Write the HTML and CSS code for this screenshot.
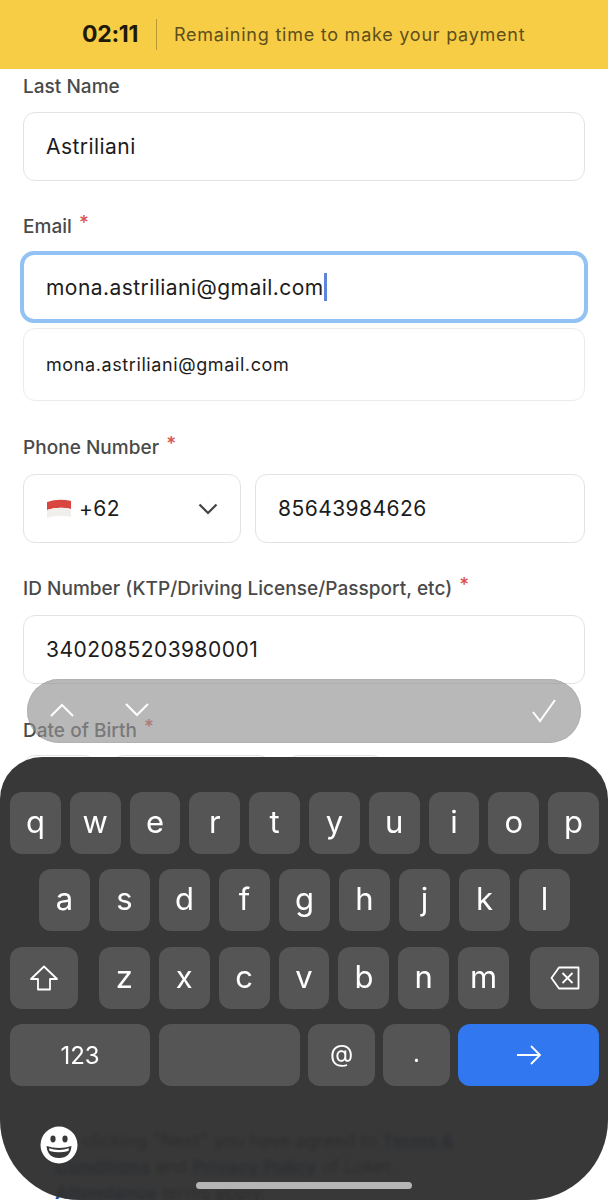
FILE: index.html
```html
<!DOCTYPE html>
<html lang="en">
<head>
    <meta charset="UTF-8">
    <meta name="viewport" content="width=device-width, initial-scale=1.0">
    <title>Payment Details</title>
    <link rel="stylesheet" href="styles.css">
</head>
<body>
    <div class="timer-bar">
        <span class="timer-count">02:11</span>
        <span class="timer-text">Remaining time to make your payment</span>
    </div>

    <form class="form">
        <div class="label first">Last Name</div>
        <div class="input">Astriliani</div>

        <div class="label email">Email <span class="req">*</span></div>
        <div class="input focused">mona.astriliani@gmail.com<span class="caret"></span></div>
        <div class="suggestion">mona.astriliani@gmail.com</div>

        <div class="label phone">Phone Number <span class="req">*</span></div>
        <div class="phone-row">
            <div class="input code">
                <svg class="flag" width="26" height="20" viewBox="0 0 26 20">
                    <path d="M1 3 Q13 -1 25 2 V10 Q13 7 1 11 Z" fill="#d8463f"/>
                    <path d="M1 11 Q13 7 25 10 V18 Q13 15 1 19 Z" fill="#f1efec"/>
                </svg>
                <span>+62</span>
                <svg class="chevron" width="20" height="12" viewBox="0 0 20 12">
                    <path d="M1.5 1.5 L10 10 L18.5 1.5" fill="none" stroke="#444" stroke-width="2.2"/>
                </svg>
            </div>
            <div class="input number">85643984626</div>
        </div>

        <div class="label">ID Number (KTP/Driving License/Passport, etc) <span class="req">*</span></div>
        <div class="input">3402085203980001</div>

        <div class="label dob">Date of Birth <span class="req">*</span></div>
        <div class="dob-row">
            <div class="input day"></div>
            <div class="input month"></div>
            <div class="input year"></div>
        </div>

        <p class="terms">By clicking "Next" you have agreed to <a href="#">Terms &amp; Conditions</a> and <a href="#">Privacy Policy</a> of Loket. <a href="#">Attendance</a> terms apply.</p>
    </form>

    <!-- iOS keyboard sits over the form -->
    <div class="accessory">
        <div class="arrows">
            <svg width="26" height="16" viewBox="0 0 26 16"><path d="M2 14 L13 3 L24 14" fill="none" stroke="#fff" stroke-width="2"/></svg>
            <svg width="26" height="16" viewBox="0 0 26 16"><path d="M2 2 L13 13 L24 2" fill="none" stroke="#fff" stroke-width="2"/></svg>
        </div>
        <svg width="26" height="26" viewBox="0 0 26 26"><path d="M2 14 L9 23 L24 2" fill="none" stroke="#fff" stroke-width="2"/></svg>
    </div>

    <div class="keyboard">
        <div class="key-row">
            <div class="key">q</div><div class="key">w</div><div class="key">e</div><div class="key">r</div><div class="key">t</div><div class="key">y</div><div class="key">u</div><div class="key">i</div><div class="key">o</div><div class="key">p</div>
        </div>
        <div class="key-row middle">
            <div class="key">a</div><div class="key">s</div><div class="key">d</div><div class="key">f</div><div class="key">g</div><div class="key">h</div><div class="key">j</div><div class="key">k</div><div class="key">l</div>
        </div>
        <div class="key-row">
            <div class="key wide shift">
                <svg width="28" height="26" viewBox="0 0 28 26"><path d="M14 1.5 L27 14 H20 V24.5 H8 V14 H1 Z" fill="none" stroke="#fff" stroke-width="1.8" stroke-linejoin="round"/></svg>
            </div>
            <div class="key">z</div><div class="key">x</div><div class="key">c</div><div class="key">v</div><div class="key">b</div><div class="key">n</div><div class="key">m</div>
            <div class="key wide back">
                <svg width="30" height="24" viewBox="0 0 30 24"><path d="M9 1.5 H28.5 V22.5 H9 L1.5 12 Z" fill="none" stroke="#fff" stroke-width="1.8" stroke-linejoin="round"/><path d="M12.5 7 L22.5 17 M22.5 7 L12.5 17" stroke="#fff" stroke-width="1.8"/></svg>
            </div>
        </div>
        <div class="key-row bottom">
            <div class="key num">123</div>
            <div class="key space"></div>
            <div class="key sym at">@</div>
            <div class="key sym dot">.</div>
            <div class="key go">
                <svg width="26" height="22" viewBox="0 0 26 22"><path d="M1 11 H24 M15 2 L24 11 L15 20" fill="none" stroke="#fff" stroke-width="1.8"/></svg>
            </div>
        </div>
        <div class="key-footer">
            <svg width="38" height="38" viewBox="0 0 38 38">
                <circle cx="19" cy="19" r="18.5" fill="#fff"/>
                <ellipse cx="13" cy="13" rx="2.6" ry="3.4" fill="#383838"/>
                <ellipse cx="25" cy="13" rx="2.6" ry="3.4" fill="#383838"/>
                <path d="M6.5 20 Q19 24 31.5 20 Q30.5 32 19 32 Q7.5 32 6.5 20 Z" fill="#383838"/>
                <path d="M9 22.3 Q19 25.5 29 22.3 L28.4 25 Q19 27.5 9.6 25 Z" fill="#fff"/>
            </svg>
        </div>
        <div class="home-bar"></div>
    </div>
</body>
</html>
```

FILE: styles.css
```css
/* General Styles */
html, body {
    height: 1200px;
}

body {
    margin: 0;
    overflow: hidden;
    position: relative;
    background: #fff;
    font-family: Inter, "Liberation Sans", sans-serif;
    color: #1c1c1c;
}

/* Timer */
.timer-bar {
    height: 69px;
    background: #f6cd45;
    display: flex;
    align-items: center;
    padding-left: 82px;
    box-sizing: border-box;
}

.timer-count {
    font-size: 23px;
    font-weight: 700;
    letter-spacing: -0.3px;
    color: #1f1a08;
    width: 74px;
    border-right: 1px solid #b89a35;
    line-height: 31px;
}

.timer-text {
    margin-left: 17px;
    font-size: 18px;
    letter-spacing: 0.76px;
    color: #5e4f1c;
}

/* Form */
.form {
    padding: 0 23px;
}

.label {
    margin: 34px 0 14px;
    font-size: 19px;
    font-weight: 500;
    letter-spacing: 0.03px;
    line-height: 24px;
    color: #4a4a4a;
}

.label.first {
    margin: 6px 0 13px;
}

.label.email {
    margin-bottom: 12px;
}

.label.phone {
    margin-top: 35px;
}

.label.dob {
    margin: 35px 0 12px;
}

.req {
    color: #d9534f;
    position: relative;
    top: -4px;
    margin-left: 2px;
}

.input {
    height: 69px;
    box-sizing: border-box;
    border: 1.5px solid #e1e3e6;
    border-radius: 12px;
    padding-left: 22px;
    display: flex;
    align-items: center;
    font-size: 21px;
    letter-spacing: 0.45px;
    background: #fff;
}

.input.focused {
    margin: 0 -3px;
    height: 72px;
    border: 4px solid #92c2f3;
    border-radius: 14px;
    padding-left: 22px;
}

.caret {
    display: inline-block;
    width: 3px;
    height: 28px;
    margin-left: 0;
    background: #5f84d8;
}

.suggestion {
    height: 73px;
    margin-top: 5px;
    box-sizing: border-box;
    border: 1.5px solid #e9ebee;
    border-radius: 12px;
    padding-left: 22px;
    display: flex;
    align-items: center;
    font-size: 18px;
    letter-spacing: 0.6px;
}

.phone-row {
    display: flex;
    gap: 14px;
}

.input.code {
    width: 218px;
    flex: none;
    gap: 7px;
}

.flag {
    flex: none;
}

.chevron {
    margin-left: auto;
    margin-right: 22px;
}

.input.number {
    flex: 1;
}

.dob-row {
    display: flex;
    gap: 15px;
}

.day { width: 73px; }
.month { width: 160px; }
.year { width: 98px; }

.terms {
    margin: 304px 100px 0 32px;
    font-size: 18px;
    line-height: 26px;
}

.terms a {
    color: #1d4f9e;
    font-weight: 700;
}

/* Accessory bar above keyboard */
.accessory {
    position: absolute;
    left: 27px;
    top: 679px;
    width: 554px;
    height: 64px;
    box-sizing: border-box;
    border-radius: 32px;
    background: rgba(146, 146, 146, 0.65);
    box-shadow: inset 0 0 1px rgba(0, 0, 0, 0.35);
    display: flex;
    align-items: center;
    justify-content: space-between;
    padding: 0 24px 0 22px;
}

.arrows {
    display: flex;
    gap: 49px;
    margin-top: -2px;
}

/* Keyboard */
.keyboard {
    position: absolute;
    left: 0;
    right: 0;
    top: 757px;
    bottom: 0;
    box-sizing: border-box;
    padding: 35px 9px 0 10px;
    border-radius: 42px 42px 80px 80px;
    background: rgba(45, 45, 45, 0.95);
    backdrop-filter: blur(2px);
    display: flex;
    flex-direction: column;
    gap: 15.4px;
}

.key-row {
    display: flex;
    gap: 9px;
}

.key-row.middle {
    padding: 0 29px;
}

.key {
    flex: 1;
    height: 62px;
    border-radius: 12px;
    background: #555;
    color: #fff;
    font-size: 31px;
    display: flex;
    align-items: center;
    justify-content: center;
    padding-bottom: 3px;
    box-sizing: border-box;
}

.key.wide {
    flex: none;
    width: 68px;
    padding-bottom: 0;
}

.key.shift {
    margin-right: 12px;
}

.key.back {
    margin-left: 12px;
    width: 69px;
}

.key-row.bottom {
    gap: 8px;
}

.key.num {
    flex: none;
    width: 140px;
    margin-right: 1px;
    font-size: 24px;
    padding-bottom: 0;
}

.key.space {
    flex: none;
    width: 141px;
}

.key.sym {
    flex: none;
    width: 67px;
    font-size: 24px;
}

.key.go {
    flex: none;
    width: 141px;
    background: #3077f0;
    padding-bottom: 0;
}

.key-footer {
    padding: 24px 0 0 30px;
}

.home-bar {
    position: absolute;
    left: 196px;
    bottom: 11px;
    width: 216px;
    height: 7px;
    border-radius: 4px;
    background: #b5b5b5;
}
```
